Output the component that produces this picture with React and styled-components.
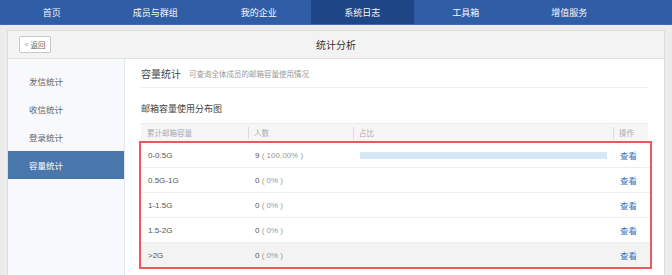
import styled, { createGlobalStyle } from "styled-components";

const GlobalStyle = createGlobalStyle`
  * { box-sizing: border-box; margin: 0; padding: 0; }
  body {
    background: #ececec;
    font-family: "Liberation Sans", "Noto Sans CJK SC", sans-serif;
    color: #444;
  }
`;

const tabs = ["首页", "成员与群组", "我的企业", "系统日志", "工具箱", "增值服务"];
const menu = ["发信统计", "收信统计", "登录统计", "容量统计"];
const rows = [
    { range: "0-0.5G", count: 9, pct: "100.00%", bar: 100 },
    { range: "0.5G-1G", count: 0, pct: "0%", bar: 0 },
    { range: "1-1.5G", count: 0, pct: "0%", bar: 0 },
    { range: "1.5-2G", count: 0, pct: "0%", bar: 0 },
    { range: ">2G", count: 0, pct: "0%", bar: 0 },
];

const App = () => {
    return (
        <>
            <GlobalStyle />
            <Nav>
                {tabs.map(t => (
                    <Tab key={t} active={t === "系统日志"}>{t}</Tab>
                ))}
            </Nav>
            <Page>
                <Card>
                    <CardHeader>
                        <BackButton><span>«</span>返回</BackButton>
                        <CardTitle>统计分析</CardTitle>
                    </CardHeader>
                    <CardBody>
                        <Sidebar>
                            {menu.map(m => (
                                <MenuItem key={m} active={m === "容量统计"}>{m}</MenuItem>
                            ))}
                        </Sidebar>
                        <Content>
                            <TitleRow>
                                <Title>容量统计</Title>
                                <Subtitle>可查询全体成员的邮箱容量使用情况</Subtitle>
                            </TitleRow>
                            <SubHeading>邮箱容量使用分布图</SubHeading>
                            <HeadRow>
                                <HeadCell>累计邮箱容量</HeadCell>
                                <HeadCell divider>人数</HeadCell>
                                <HeadCell divider>占比</HeadCell>
                                <HeadCell divider>操作</HeadCell>
                            </HeadRow>
                            <Marked>
                                {rows.map((r, i) => (
                                    <Row key={r.range} shaded={i === rows.length - 1}>
                                        <Cell>{r.range}</Cell>
                                        <Cell>{r.count}<Muted> ( {r.pct} )</Muted></Cell>
                                        <Cell>
                                            {r.bar > 0 && <BarTrack><Bar style={{ width: r.bar + "%" }} /></BarTrack>}
                                        </Cell>
                                        <Cell><ViewLink>查看</ViewLink></Cell>
                                    </Row>
                                ))}
                            </Marked>
                        </Content>
                    </CardBody>
                </Card>
            </Page>
        </>
    );
}

const Nav = styled.div`
    display: flex;
    height: 25px;
    background: #2f5ea7;
    border-bottom: 1px solid #3e6cb2;
`;

const Tab = styled.div`
    width: 103.5px;
    display: flex;
    align-items: center;
    justify-content: center;
    font-size: 9px;
    color: #f4f7fb;
    background: ${p => p.active ? "#1e4686" : "transparent"};
`;

const Page = styled.div`
    padding: 5px 7px 0 7px;
`;

const Card = styled.div`
    background: #fff;
    border: 1px solid #dedede;
    border-bottom: none;
    height: 245px;
    display: flex;
    flex-direction: column;
`;

const CardHeader = styled.div`
    height: 28px;
    flex-shrink: 0;
    background: #f3f3f3;
    border-bottom: 1px solid #e2e2e2;
    display: flex;
    align-items: center;
    padding: 0 11px;
`;

const BackButton = styled.button`
    width: 32px;
    height: 17px;
    border: 1px solid #c8c8c8;
    border-radius: 2px;
    background: #fff;
    font-family: inherit;
    font-size: 7.5px;
    color: #666;
    display: flex;
    align-items: center;
    justify-content: center;
    gap: 2px;

    span {
        color: #aaa;
    }
`;

const CardTitle = styled.div`
    flex: 1;
    text-align: center;
    font-size: 10px;
    color: #333;
    margin-right: 32px;
`;

const CardBody = styled.div`
    flex: 1;
    display: flex;
`;

const Sidebar = styled.div`
    width: 117px;
    flex-shrink: 0;
    background: #f7f9fc;
    border-right: 1px solid #dfe5ee;
    padding-top: 8px;
`;

const MenuItem = styled.div`
    height: 28px;
    display: flex;
    align-items: center;
    padding-left: 21px;
    font-size: 8.5px;
    color: ${p => p.active ? "#fff" : "#666"};
    background: ${p => p.active ? "#4a77ab" : "transparent"};
`;

const Content = styled.div`
    flex: 1;
    padding: 0 16px 0 16px;
`;

const TitleRow = styled.div`
    height: 29px;
    display: flex;
    align-items: center;
    border-bottom: 1px solid #ececec;
`;

const Title = styled.div`
    font-size: 10px;
    color: #444;
`;

const Subtitle = styled.div`
    font-size: 7.5px;
    color: #999;
    margin-left: 8px;
    margin-top: 1px;
`;

const SubHeading = styled.div`
    margin: 14px 0 7px;
    line-height: 14px;
    font-size: 9px;
    color: #444;
`;

const grid = `
    display: grid;
    grid-template-columns: 107px 105px 1fr 35px;
`;

const HeadRow = styled.div`
    ${grid}
    height: 18px;
    background: #f6f6f6;
    border-top: 1px solid #ececec;
`;

const HeadCell = styled.div`
    display: flex;
    align-items: center;
    padding-left: 6px;
    font-size: 7.5px;
    color: #aaa;
    background: ${p => p.divider ? "linear-gradient(#dcdcdc, #dcdcdc) left center / 1px 12px no-repeat" : "none"};
`;

const Marked = styled.div`
    margin: 0 -4px 0 -2px;
    border: 2px solid #f0565b;
`;

const Row = styled.div`
    ${grid}
    grid-template-columns: 107px 105px 1fr 37px;
    height: 25px;
    border-bottom: 1px solid #eeeeee;
    background: ${p => p.shaded ? "#f3f3f3" : "#fff"};

    &:last-child {
        border-bottom: none;
        height: 24px;
    }
`;

const Cell = styled.div`
    display: flex;
    align-items: center;
    padding: 0 6px 0 7px;
    font-size: 8px;
    color: #555;
`;

const Muted = styled.span`
    color: #999;
    white-space: pre;
`;

const BarTrack = styled.div`
    flex: 1;
    height: 7px;
`;

const Bar = styled.div`
    height: 100%;
    background: #d4e8f6;
`;

const ViewLink = styled.a`
    font-size: 8.5px;
    color: #3a72b8;
    cursor: pointer;
`;

export default App;
